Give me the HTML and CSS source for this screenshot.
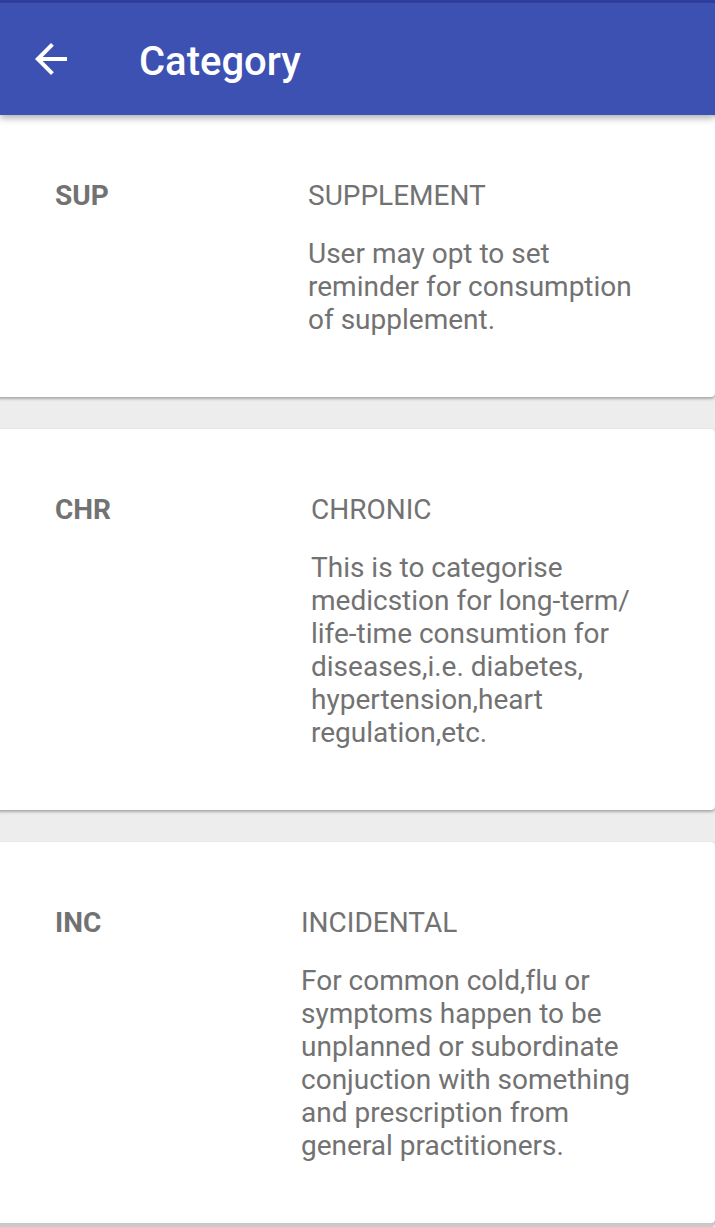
FILE: index.html
```html
<!DOCTYPE html>
<html lang="en">
<head>
<meta charset="utf-8">
<meta name="viewport" content="width=device-width, initial-scale=1">
<title>Category</title>
<link rel="stylesheet" href="styles.css">
</head>
<body>
<header class="toolbar">
  <button class="back" type="button" aria-label="Back">
    <svg viewBox="4 4 16 16" width="32" height="32" aria-hidden="true"><path d="M20 11H7.83l5.59-5.59L12 4l-8 8 8 8 1.41-1.41L7.83 13H20v-2z" fill="#fff"/></svg>
  </button>
  <h1 class="title">Category</h1>
</header>
<main class="list">
  <article class="card sup">
    <h2 class="code">SUP</h2>
    <div class="info">
      <h3 class="name">SUPPLEMENT</h3>
      <p class="text">User may opt to set<br>reminder for consumption<br>of supplement.</p>
    </div>
  </article>
  <article class="card chr">
    <h2 class="code">CHR</h2>
    <div class="info">
      <h3 class="name">CHRONIC</h3>
      <p class="text">This is to categorise<br>medicstion for long-term/<br>life-time consumtion for<br>diseases,i.e. diabetes,<br>hypertension,heart<br>regulation,etc.</p>
    </div>
  </article>
  <article class="card inc">
    <h2 class="code">INC</h2>
    <div class="info">
      <h3 class="name">INCIDENTAL</h3>
      <p class="text">For common cold,flu or<br>symptoms happen to be<br>unplanned or subordinate<br>conjuction with something<br>and prescription from<br>general practitioners.</p>
    </div>
  </article>
</main>
</body>
</html>
```
FILE: styles.css
```css
* { box-sizing: border-box; }
body {
  margin: 0;
  background: #ededed;
  color: #727272;
  font-family: Roboto, "Liberation Sans", sans-serif;
  font-size: 28px;
  font-variant-ligatures: none;
  line-height: 33px;
}
h1, h2, h3, p { margin: 0; }
.toolbar {
  position: relative;
  z-index: 1;
  display: flex;
  align-items: center;
  gap: 72px;
  height: 115px;
  padding: 0 35px;
  border-top: 3px solid #2f3e9c;
  background: #3d51b3;
  box-shadow: 0 3px 7px rgba(0, 0, 0, 0.32);
}
.back {
  display: flex;
  padding: 0;
  border: 0;
  background: none;
}
.title {
  padding-top: 6px;
  color: #fff;
  font-size: 40px;
  font-weight: 500;
  line-height: 48px;
}
.list {
  display: grid;
  gap: 32px;
  padding-bottom: 4px;
}
.card {
  display: grid;
  margin-left: -4px;
  padding: 64px 55px 61px 59px;
  border-radius: 4px;
  background: #fff;
  box-shadow: 0 0 1px rgba(0, 0, 0, 0.2), 0 2px 3px rgba(0, 0, 0, 0.28);
}
.card:last-child { box-shadow: 0 0 1px rgba(0, 0, 0, 0.2), 0 4px 0 #cacaca; }
.sup { grid-template-columns: 253px 1fr; }
.chr { grid-template-columns: 256px 1fr; }
.inc { grid-template-columns: 246px 1fr; }
.code {
  font-size: 28px;
  font-weight: 700;
}
.info {
  display: grid;
  gap: 25px;
}
.name {
  font-size: 28px;
  font-weight: 400;
}
.text { white-space: nowrap; }
```
